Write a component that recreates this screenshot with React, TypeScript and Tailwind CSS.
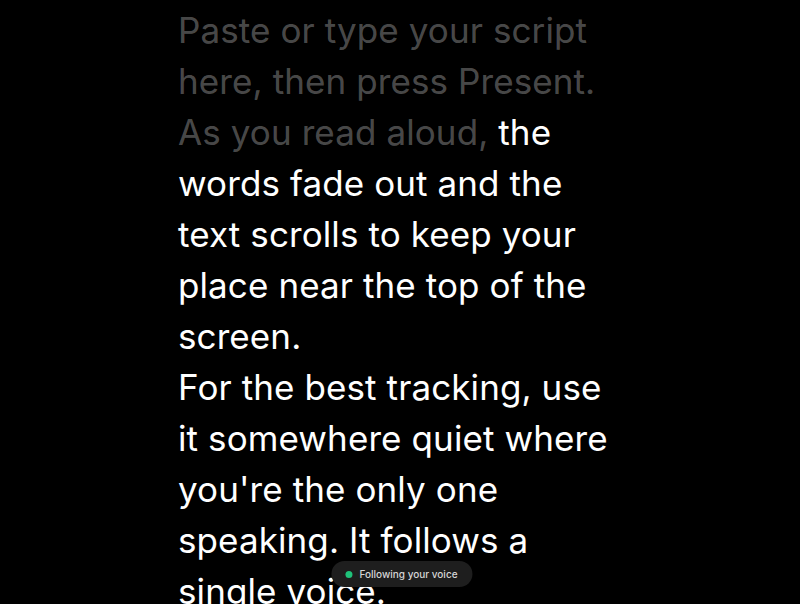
import React from "react";

const readText = "Paste or type your script here, then press Present. As you read aloud,";

export default function App() {
  return (
    <div
      className="relative h-[604px] w-full overflow-hidden bg-black"
      style={{ fontFamily: "Inter, 'Noto Sans', sans-serif" }}
    >
      <div className="mx-auto w-[444px] pt-[5px] text-[35px] leading-[51px] tracking-[0.1px] text-white">
        <p>
          <span className="text-white/30">{readText}</span> the words fade out and the
          text scrolls to keep your place near the top of the screen.
        </p>
        <p>
          For the best tracking, use it somewhere quiet where you're the only one
          speaking. It follows a single voice.
        </p>
      </div>

      {/* status pill floats over the script */}
      <div className="absolute bottom-[17px] left-[calc(50%+2px)] flex h-[26px] -translate-x-1/2 items-center gap-[7px] rounded-full bg-[#1e1e1e] pl-[14px] pr-[15px]">
        <span className="h-[7px] w-[7px] rounded-full bg-[#1fc27a]" />
        <span className="text-[10px] font-medium text-[#d6d6d6]">Following your voice</span>
      </div>
    </div>
  );
}
